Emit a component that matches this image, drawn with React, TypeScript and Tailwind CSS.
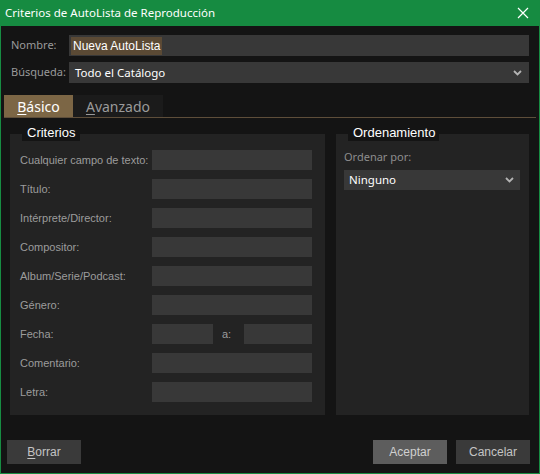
import React from 'react';

const segoe = { fontFamily: '"Noto Sans", "Open Sans", sans-serif' };

const Chevron = () => (
  <svg width="9" height="6" viewBox="0 0 9 6" className="shrink-0">
    <path d="M1 1 L4.5 4.5 L8 1" stroke="#b4b4b4" strokeWidth="1.8" fill="none" />
  </svg>
);

const FieldRow: React.FC<{ label: string; children?: React.ReactNode }> = ({ label, children }) => (
  <div className="flex items-center h-[20px]">
    <div className="w-[132px] text-[11px] text-[#9c9c9c]">{label}</div>
    {children ?? <div className="w-[160px] h-[20px] bg-[#383838]" />}
  </div>
);

export default function App() {
  const fields = [
    'Cualquier campo de texto:',
    'Título:',
    'Intérprete/Director:',
    'Compositor:',
    'Album/Serie/Podcast:',
    'Género:',
  ];

  return (
    <div
      className="w-[540px] h-[474px] flex flex-col border-x border-b border-[#178c42] bg-[#141414] select-none"
      style={{ fontFamily: '"Liberation Sans", Arial, sans-serif' }}
    >
      {/* title bar */}
      <div className="h-[26px] shrink-0 bg-[#168b41] flex items-center justify-between pl-[5px] pr-[11px] -mx-px">
        <span className="text-[11.5px] text-white" style={segoe}>
          Criterios de AutoLista de Reproducción
        </span>
        <svg width="12" height="12" viewBox="0 0 12 12">
          <path d="M1 1 L11 11 M11 1 L1 11" stroke="#ffffff" strokeWidth="1.2" />
        </svg>
      </div>

      <div className="flex-1 flex flex-col pt-[9px]">
        {/* top fields */}
        <div className="flex flex-col gap-[6px] pl-[10px] pr-[10px]">
          <div className="flex items-center h-[21px]">
            <div className="w-[58px] text-[11px] text-[#9a9a9a]" style={segoe}>Nombre:</div>
            <div className="flex-1 h-[21px] bg-[#383838] flex items-center pl-[2px]">
              <span className="bg-[#5b4a35] text-white text-[12px] px-[2px] leading-[18px]">Nueva AutoLista</span>
            </div>
          </div>
          <div className="flex items-center h-[21px]">
            <div className="w-[58px] text-[11px] text-[#9a9a9a]" style={segoe}>Búsqueda:</div>
            <div className="flex-1 h-[21px] bg-[#383838] flex items-center justify-between pl-[6px] pr-[7px]">
              <span className="text-white text-[11.5px]" style={segoe}>Todo el Catálogo</span>
              <Chevron />
            </div>
          </div>
        </div>

        {/* tabs */}
        <div className="mt-[12px] mx-[3px] flex h-[23px] border-b border-[#5e4e3a]">
          <div className="w-[69px] bg-[#7c6645] flex items-center justify-center text-[14px] text-white" style={segoe}>
            <span><span className="underline underline-offset-2">B</span>ásico</span>
          </div>
          <div className="w-[90px] bg-[#1b1b1b] flex items-center justify-center text-[14px] text-[#9a9a9a]" style={segoe}>
            <span><span className="underline underline-offset-2">A</span>vanzado</span>
          </div>
        </div>

        {/* panels */}
        <div className="mt-[16px] flex gap-[11px] pl-[9px] pr-[10px] h-[281px]">
          <div className="relative w-[315px] bg-[#232323] pl-[10px] pt-[16px] flex flex-col gap-[9px]">
            <div className="absolute left-[12px] -top-[9px] h-[16px] w-[58px] bg-[#141414] flex items-center pl-[5px] text-[13px] text-white">
              Criterios
            </div>
            {fields.map(f => (
              <FieldRow key={f} label={f} />
            ))}
            <FieldRow label="Fecha:">
              <div className="w-[61px] h-[20px] bg-[#383838]" />
              <div className="w-[31px] text-[11px] text-[#9c9c9c] pl-[9px]">a:</div>
              <div className="w-[68px] h-[20px] bg-[#383838]" />
            </FieldRow>
            <FieldRow label="Comentario:" />
            <FieldRow label="Letra:" />
          </div>

          <div className="relative flex-1 bg-[#232323] pl-[8px] pr-[9px] pt-[15px]">
            <div className="absolute left-[12px] -top-[9px] h-[16px] w-[91px] bg-[#141414] flex items-center pl-[5px] text-[13px] text-white">
              Ordenamiento
            </div>
            <div className="text-[11px] text-[#8e8e8e]" style={segoe}>Ordenar por:</div>
            <div className="mt-[4px] h-[20px] bg-[#383838] flex items-center justify-between pl-[5px] pr-[6px]">
              <span className="text-[11.5px] text-white" style={segoe}>Ninguno</span>
              <Chevron />
            </div>
          </div>
        </div>

        {/* buttons */}
        <div className="mt-[25px] flex pl-[6px] pr-[9px] gap-[9px]">
          <button className="w-[74px] h-[24px] bg-[#3a3a3a] text-[12px] text-[#c4c4c4]">
            <span className="underline underline-offset-2">B</span>orrar
          </button>
          <div className="flex-1" />
          <button className="w-[74px] h-[24px] bg-[#5d5d5d] text-[12px] text-[#d0d0d0]">Aceptar</button>
          <button className="w-[74px] h-[24px] bg-[#3a3a3a] text-[12px] text-[#c4c4c4]">Cancelar</button>
        </div>
      </div>
    </div>
  );
}
